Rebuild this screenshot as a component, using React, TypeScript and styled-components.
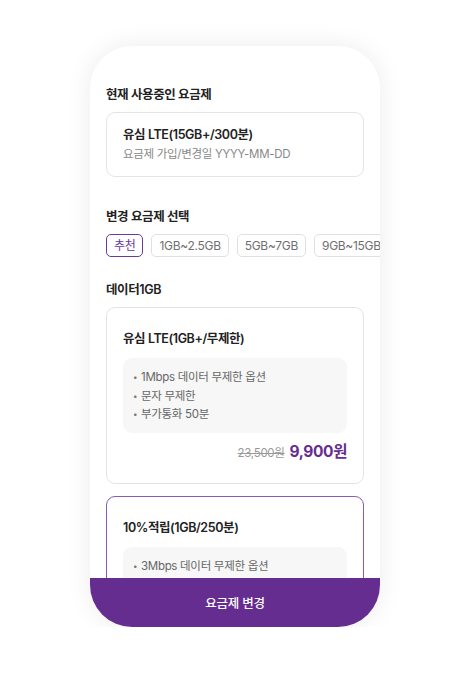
import React from 'react';
import styled, { createGlobalStyle } from 'styled-components';

const GlobalStyle = createGlobalStyle`
  body {
    margin: 0;
    background: #fff;
    font-family: Inter, 'Noto Sans CJK KR', 'Noto Sans', sans-serif;
    color: #222;
    letter-spacing: -0.3px;
  }
`;

const Page = styled.div`
  display: flex;
  justify-content: center;
  padding-top: 46px;
`;

const Phone = styled.div`
  width: 290px;
  height: 581px;
  border-radius: 42px;
  background: #fff;
  box-shadow: 0 0 26px rgba(0, 0, 0, 0.08);
  overflow: hidden;
  display: flex;
  flex-direction: column;
`;

const Scroll = styled.div`
  flex: 1;
  overflow: hidden;
  padding: 40px 16px 0;
`;

const SectionTitle = styled.h2<{ $top?: number }>`
  margin: ${({ $top }) => $top ?? 0}px 0 8px;
  font-size: 12.5px;
  font-weight: 600;
  line-height: 18px;
  letter-spacing: -0.4px;
  color: #222;
`;

const Card = styled.div<{ $active?: boolean }>`
  border: 1px solid ${({ $active }) => ($active ? '#8a5cb5' : '#e4e4e4')};
  border-radius: 9px;
  background: #fff;
`;

const CurrentCard = styled(Card)`
  padding: 12px 16px 13px;
`;

const PlanName = styled.div`
  font-size: 12.5px;
  font-weight: 600;
  line-height: 19px;
  letter-spacing: -0.4px;
  color: #222;
`;

const SubText = styled.div`
  font-size: 11.5px;
  line-height: 18px;
  color: #888;
  margin-top: 1px;
`;

const Chips = styled.div`
  display: flex;
  gap: 8px;
  margin-bottom: 24px;
  white-space: nowrap;
`;

const Chip = styled.button<{ $selected?: boolean }>`
  flex: none;
  height: 23px;
  padding: 0 7px;
  border-radius: 5px;
  border: 1px solid ${({ $selected }) => ($selected ? '#6a3a9a' : '#e0e0e0')};
  background: #fff;
  color: ${({ $selected }) => ($selected ? '#6a3a9a' : '#6f6f6f')};
  font-family: inherit;
  font-size: 12px;
  letter-spacing: -0.3px;
  line-height: 21px;
`;

const PlanCard = styled(Card)`
  padding: 21px 16px 20px;
  margin-bottom: 12px;
`;

const Features = styled.ul`
  list-style: none;
  margin: 10px 0 0;
  padding: 10px 12px 9px 10px;
  background: #f7f7f7;
  border-radius: 9px;
`;

const Feature = styled.li`
  font-size: 11.5px;
  line-height: 18.5px;
  color: #666;
  &::before {
    content: '•';
    display: inline-block;
    width: 8px;
    font-size: 8px;
    color: #777;
    vertical-align: 1px;
  }
`;

const PriceRow = styled.div`
  display: flex;
  justify-content: flex-end;
  align-items: baseline;
  gap: 5px;
  margin-top: 9px;
  line-height: 20px;
`;

const OldPrice = styled.span`
  font-size: 11.5px;
  color: #999;
  text-decoration: line-through;
`;

const Price = styled.span`
  font-size: 15.5px;
  font-weight: 700;
  color: #662d91;
  letter-spacing: -0.4px;
`;

const ChangeButton = styled.button`
  flex: none;
  height: 49px;
  border: none;
  background: #662d91;
  color: #fff;
  font-family: inherit;
  font-size: 12.5px;
  font-weight: 500;
  letter-spacing: -0.2px;
`;

const plans = [
  {
    name: '유심 LTE(1GB+/무제한)',
    features: ['1Mbps 데이터 무제한 옵션', '문자 무제한', '부가통화 50분'],
    oldPrice: '23,500원',
    price: '9,900원',
  },
  {
    name: '10%적립(1GB/250분)',
    features: ['3Mbps 데이터 무제한 옵션', '문자 무제한', '부가통화 50분'],
    oldPrice: '20,900원',
    price: '8,800원',
    active: true,
  },
];

const chips = ['추천', '1GB~2.5GB', '5GB~7GB', '9GB~15GB'];

const App: React.FC = () => {
  return (
    <Page>
      <GlobalStyle />
      <Phone>
        <Scroll>
          <SectionTitle>현재 사용중인 요금제</SectionTitle>
          <CurrentCard>
            <PlanName>유심 LTE(15GB+/300분)</PlanName>
            <SubText>요금제 가입/변경일 YYYY-MM-DD</SubText>
          </CurrentCard>

          <SectionTitle $top={31}>변경 요금제 선택</SectionTitle>
          <Chips>
            {chips.map((c, i) => (
              <Chip key={c} $selected={i === 0}>
                {c}
              </Chip>
            ))}
          </Chips>

          <SectionTitle>데이터1GB</SectionTitle>
          {plans.map((p) => (
            <PlanCard key={p.name} $active={p.active}>
              <PlanName>{p.name}</PlanName>
              <Features>
                {p.features.map((f) => (
                  <Feature key={f}>{f}</Feature>
                ))}
              </Features>
              <PriceRow>
                <OldPrice>{p.oldPrice}</OldPrice>
                <Price>{p.price}</Price>
              </PriceRow>
            </PlanCard>
          ))}
        </Scroll>
        <ChangeButton>요금제 변경</ChangeButton>
      </Phone>
    </Page>
  );
};

export default App;
